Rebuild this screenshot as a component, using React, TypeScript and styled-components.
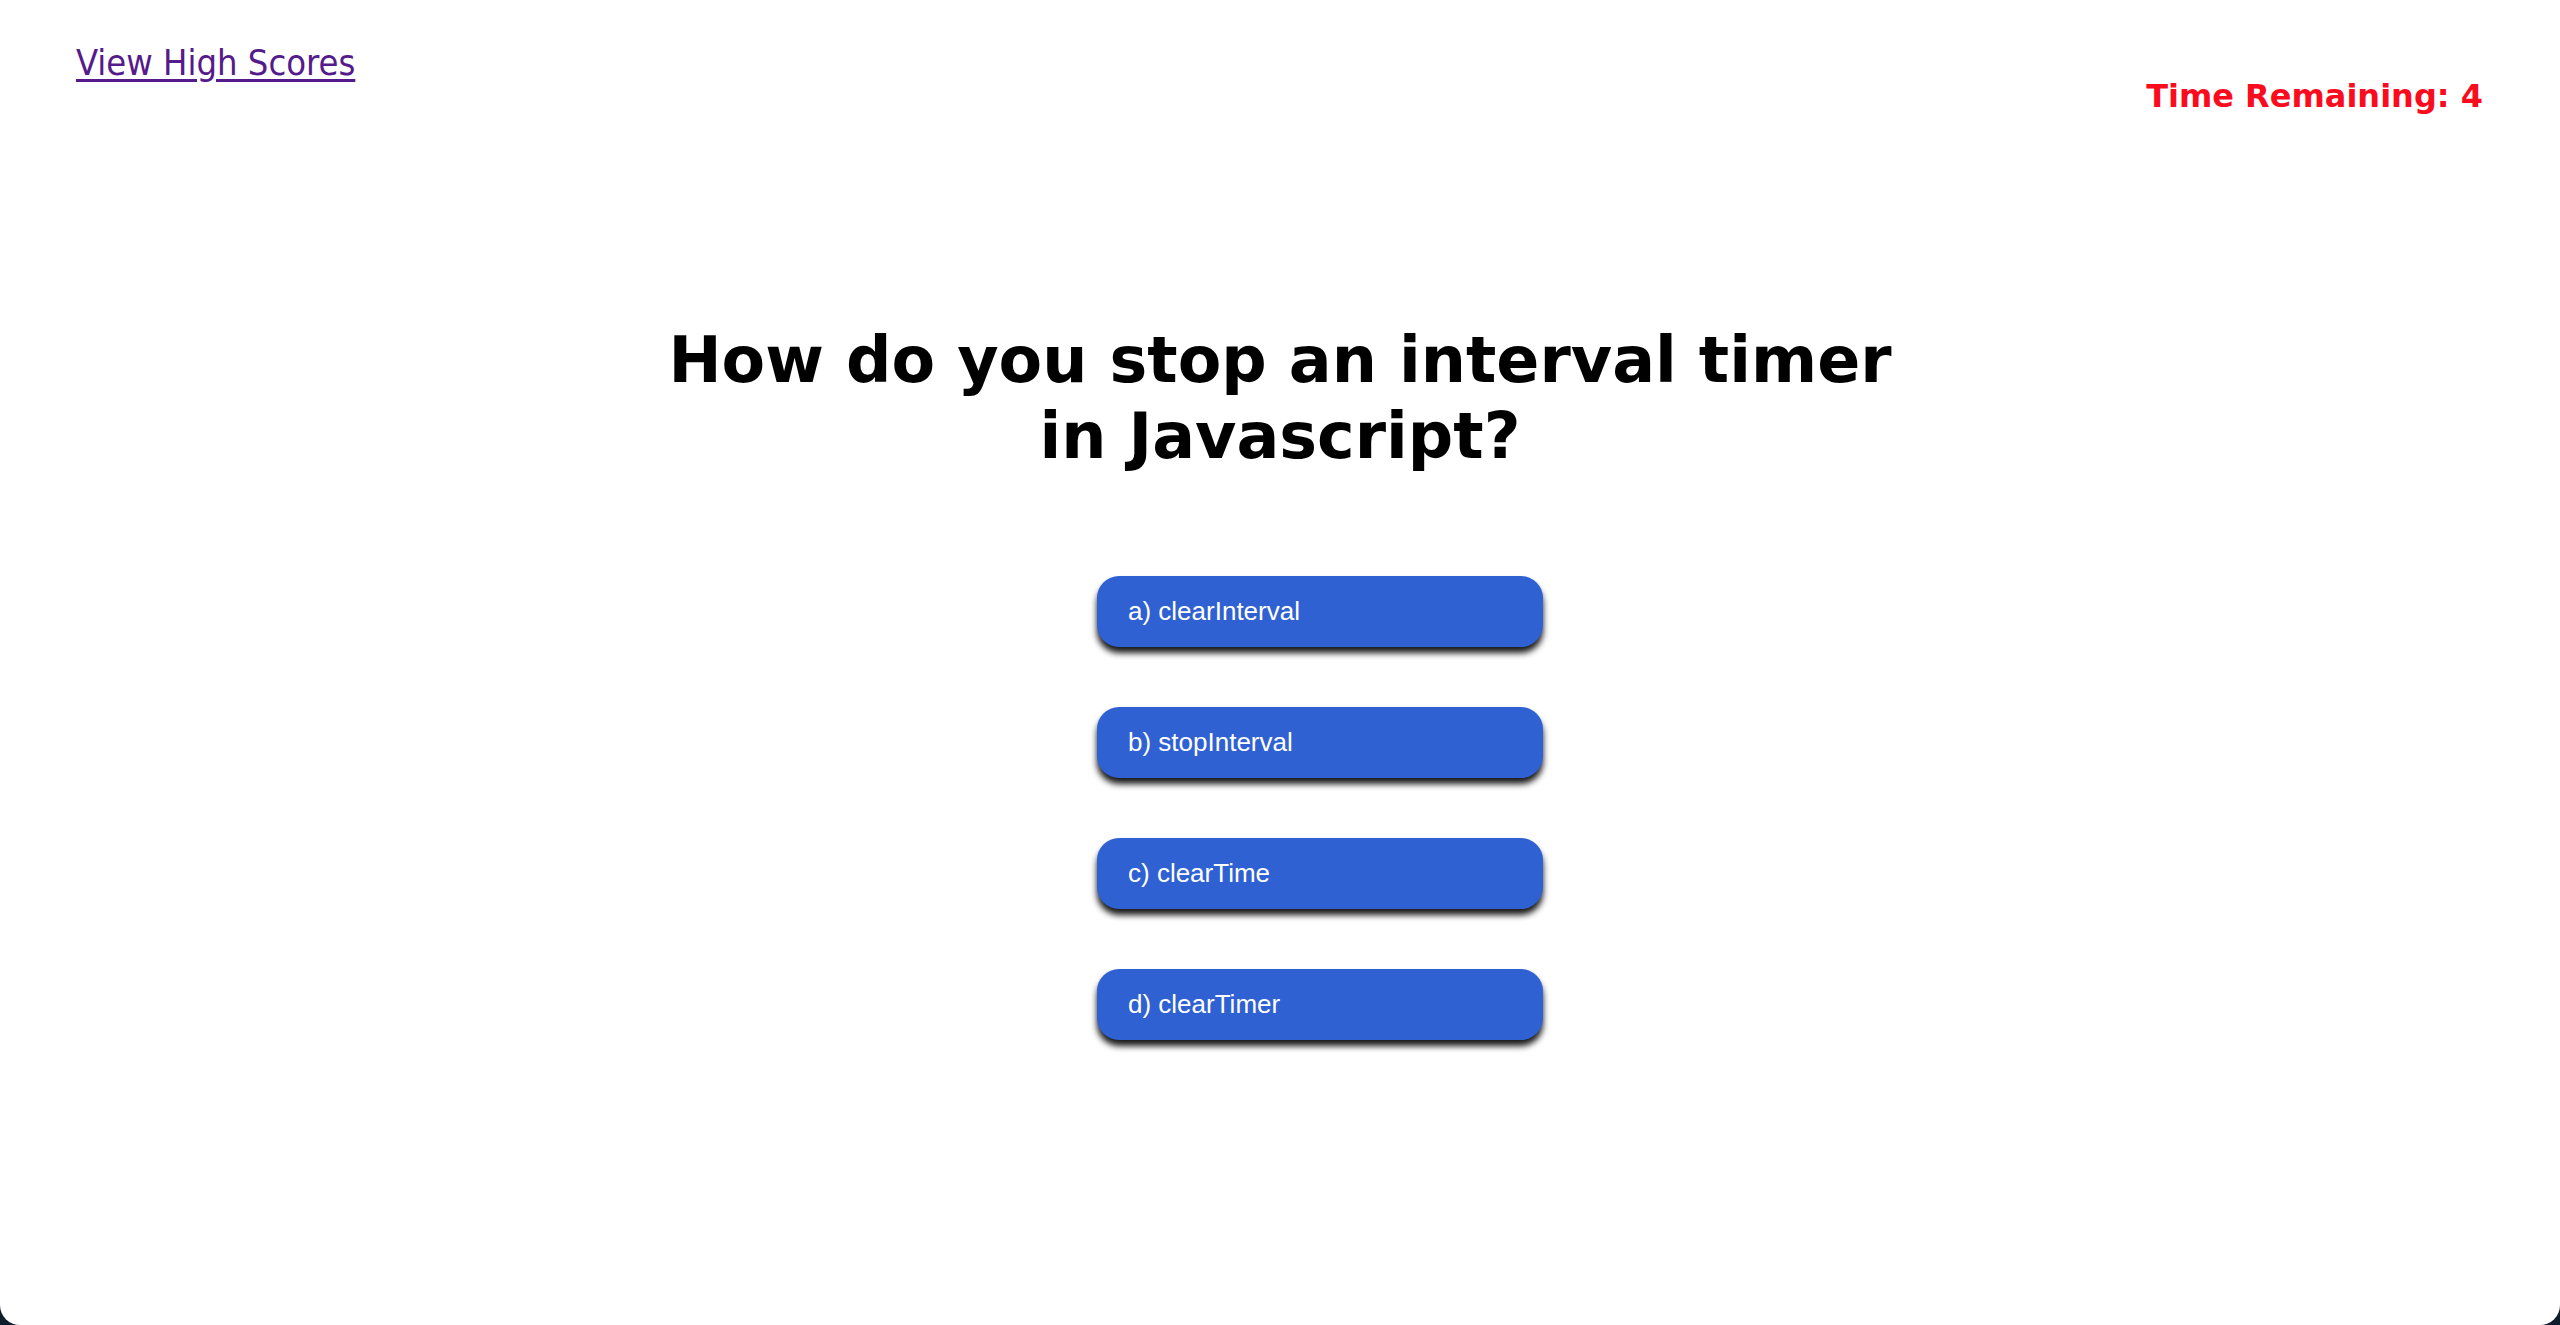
import styled, { createGlobalStyle } from 'styled-components';

const GlobalStyle = createGlobalStyle`
  html,
  body {
    margin: 0;
    padding: 0;
    background-color: #0e1c2c;
  }
`;

const Page = styled.div`
  min-height: 100vh;
  background-color: #ffffff;
  border-radius: 0 0 20px 20px;
  overflow: hidden;
  font-family: "DejaVu Sans", Verdana, sans-serif;
`;

const Header = styled.header`
  display: flex;
  justify-content: space-between;
  align-items: flex-start;
  padding: 41px 77px 0 76px;
`;

const ScoresLink = styled.a`
  font-family: "DejaVu Sans Condensed", "DejaVu Sans", sans-serif;
  font-stretch: condensed;
  font-size: 36px;
  line-height: 44px;
  color: #551a8b;
  text-decoration: underline;
  text-underline-offset: 4px;
  cursor: pointer;
`;

const Timer = styled.div`
  margin-top: 35px;
  font-size: 32px;
  line-height: 40px;
  font-weight: bold;
  color: #fa0c1e;
`;

const Question = styled.h1`
  max-width: 1280px;
  margin: 206px auto 0;
  font-size: 63.5px;
  line-height: 76px;
  font-weight: bold;
  text-align: center;
  color: #000000;
`;

const AnswerList = styled.ul`
  list-style: none;
  display: flex;
  flex-direction: column;
  align-items: center;
  gap: 60px;
  margin: 102px 0 0;
  padding: 0 0 0 80px;
`;

const AnswerButton = styled.button`
  width: 446px;
  height: 71px;
  padding: 0 31px;
  border: none;
  border-radius: 22px;
  background-color: #2f61d3;
  color: #ffffff;
  font-family: "Liberation Sans", Arial, sans-serif;
  font-size: 26px;
  text-align: left;
  box-shadow: 0 6px 6px rgba(0, 0, 0, 0.9);
  cursor: pointer;
`;

const answers = ['a) clearInterval', 'b) stopInterval', 'c) clearTime', 'd) clearTimer'];

function App() {
  return (
    <Page>
      <GlobalStyle />
      <Header>
        <ScoresLink href="#">View High Scores</ScoresLink>
        <Timer>Time Remaining: 4</Timer>
      </Header>
      <Question>How do you stop an interval timer in Javascript?</Question>
      <AnswerList>
        {answers.map((answer) => (
          <li key={answer}>
            <AnswerButton type="button">{answer}</AnswerButton>
          </li>
        ))}
      </AnswerList>
    </Page>
  );
}

export default App;
